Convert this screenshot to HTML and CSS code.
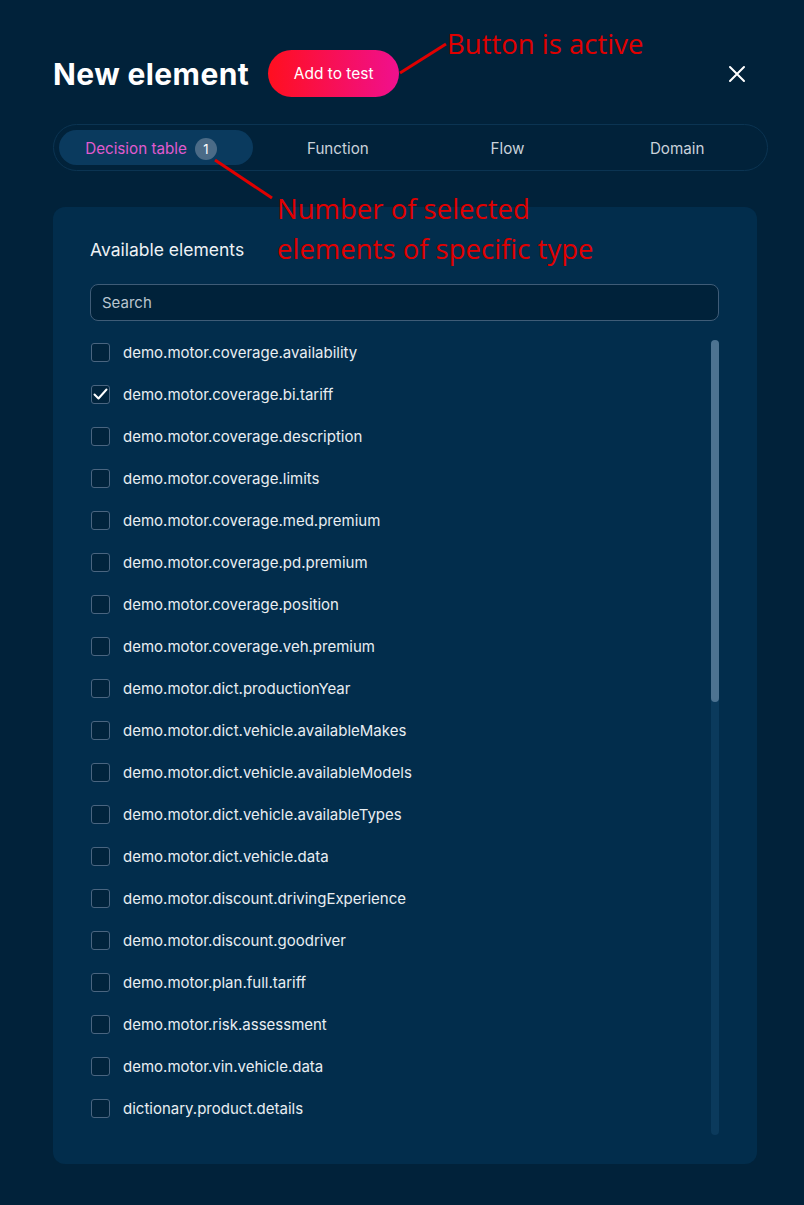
FILE: index.html
```html
<!DOCTYPE html>
<html lang="en">
<head>
    <meta charset="UTF-8">
    <title>New element</title>
    <link rel="stylesheet" href="styles.css">
</head>
<body>
    <div class="page">
        <div class="header">
            <h1 class="title">New element</h1>
            <button class="add-btn">Add to test</button>
            <button class="close-btn" aria-label="Close">
                <svg width="18" height="18" viewBox="0 0 18 18"><path d="M2 2L16 16M16 2L2 16" stroke="#fff" stroke-width="2" stroke-linecap="round"/></svg>
            </button>
        </div>

        <div class="tabs">
            <div class="tab active">Decision table <span class="badge">1</span></div>
            <div class="tab">Function</div>
            <div class="tab">Flow</div>
            <div class="tab">Domain</div>
        </div>

        <div class="panel">
            <div class="panel-title">Available elements</div>
            <div class="search">Search</div>
            <div class="list-wrap">
                <ul class="list">
                    <li><span class="box"></span>demo.motor.coverage.availability</li>
                    <li><span class="box checked"><svg width="19" height="19" viewBox="0 0 19 19"><path d="M3.5 9.5L7.5 13.5L15.5 4.5" fill="none" stroke="#fff" stroke-width="2" stroke-linecap="round" stroke-linejoin="round"/></svg></span>demo.motor.coverage.bi.tariff</li>
                    <li><span class="box"></span>demo.motor.coverage.description</li>
                    <li><span class="box"></span>demo.motor.coverage.limits</li>
                    <li><span class="box"></span>demo.motor.coverage.med.premium</li>
                    <li><span class="box"></span>demo.motor.coverage.pd.premium</li>
                    <li><span class="box"></span>demo.motor.coverage.position</li>
                    <li><span class="box"></span>demo.motor.coverage.veh.premium</li>
                    <li><span class="box"></span>demo.motor.dict.productionYear</li>
                    <li><span class="box"></span>demo.motor.dict.vehicle.availableMakes</li>
                    <li><span class="box"></span>demo.motor.dict.vehicle.availableModels</li>
                    <li><span class="box"></span>demo.motor.dict.vehicle.availableTypes</li>
                    <li><span class="box"></span>demo.motor.dict.vehicle.data</li>
                    <li><span class="box"></span>demo.motor.discount.drivingExperience</li>
                    <li><span class="box"></span>demo.motor.discount.goodriver</li>
                    <li><span class="box"></span>demo.motor.plan.full.tariff</li>
                    <li><span class="box"></span>demo.motor.risk.assessment</li>
                    <li><span class="box"></span>demo.motor.vin.vehicle.data</li>
                    <li><span class="box"></span>dictionary.product.details</li>
                </ul>
                <div class="scrollbar"><div class="thumb"></div></div>
            </div>
        </div>
    </div>

    <!-- annotations -->
    <svg class="arrows" width="804" height="300">
        <line x1="400" y1="73" x2="446" y2="44" stroke="#e00000" stroke-width="3"/>
        <line x1="215" y1="160" x2="272" y2="198" stroke="#e00000" stroke-width="3"/>
    </svg>
    <div class="note note-btn">Button is active</div>
    <div class="note note-badge">Number of selected<br>elements of specific type</div>
</body>
</html>
```

FILE: styles.css
```css
body {
    margin: 0;
    background-color: #01223a;
    font-family: Inter, "Open Sans", sans-serif;
    color: #fff;
}
.page {
    padding: 50px 36px 0 53px;
    width: 715px;
}
.header {
    display: flex;
    align-items: center;
    height: 47px;
}
.title {
    margin: 0;
    font-size: 30px;
    font-weight: 700;
    letter-spacing: 0.4px;
}
.add-btn {
    margin-left: 19px;
    width: 131px;
    height: 47px;
    border: none;
    border-radius: 24px;
    background: linear-gradient(90deg, #ff0f1f, #f0108e);
    color: #fff;
    font-family: inherit;
    font-size: 15.5px;
}
.close-btn {
    margin-left: auto;
    margin-right: 22px;
    background: none;
    border: none;
    padding: 0;
    display: flex;
}
.tabs {
    margin-top: 27px;
    height: 35px;
    padding: 5px;
    border: 1px solid #0b3452;
    border-radius: 24px;
    display: grid;
    grid-template-columns: 194px 1fr 1fr 1fr;
}
.tab {
    display: flex;
    align-items: center;
    justify-content: center;
    padding-top: 2px;
    border-radius: 19px;
    font-size: 15.2px;
    color: #c9d2da;
}
.tab.active {
    background-color: #0a3a5e;
    color: #e05bcf;
    padding-right: 10px;
}
.badge {
    margin-left: 8px;
    width: 22px;
    height: 22px;
    border-radius: 50%;
    background-color: #4b6b87;
    color: #fff;
    font-size: 13px;
    display: flex;
    align-items: center;
    justify-content: center;
}
.panel {
    margin-top: 36px;
    width: 704px;
    box-sizing: border-box;
    padding: 32px 38px 29px 37px;
    background-color: #022d4c;
    border-radius: 12px;
}
.panel-title {
    font-size: 17.5px;
    line-height: 22px;
    color: #eef2f5;
}
.search {
    margin-top: 23px;
    height: 37px;
    box-sizing: border-box;
    padding: 0 11px;
    display: flex;
    align-items: center;
    background-color: #00223a;
    border: 1px solid #3f5c77;
    border-radius: 8px;
    color: #b9c5cf;
    font-size: 15px;
}
.list-wrap {
    margin-top: 10px;
    display: flex;
    justify-content: space-between;
    height: 804px;
}
.list {
    list-style: none;
    margin: 0;
    padding: 0;
}
.list li {
    height: 42px;
    display: flex;
    align-items: center;
    font-size: 15px;
    color: #e9eef2;
}
.box {
    width: 19px;
    height: 19px;
    box-sizing: border-box;
    margin-left: 1px;
    margin-right: 13px;
    border: 1px solid #4a6580;
    border-radius: 3px;
    background-color: #01243d;
    display: flex;
}
.box svg {
    margin: -1px;
}
.scrollbar {
    margin-top: 9px;
    width: 8px;
    height: 795px;
    border-radius: 4px;
    background-color: #0b3a5c;
}
.thumb {
    height: 362px;
    border-radius: 4px;
    background-color: #4d7391;
}
.arrows {
    position: absolute;
    left: 0;
    top: 0;
}
.note {
    position: absolute;
    color: #e00000;
    font-family: "Open Sans", sans-serif;
    font-size: 27.5px;
    line-height: 40px;
}
.note-btn {
    left: 447px;
    top: 24px;
}
.note-badge {
    left: 277px;
    top: 189px;
}
```
